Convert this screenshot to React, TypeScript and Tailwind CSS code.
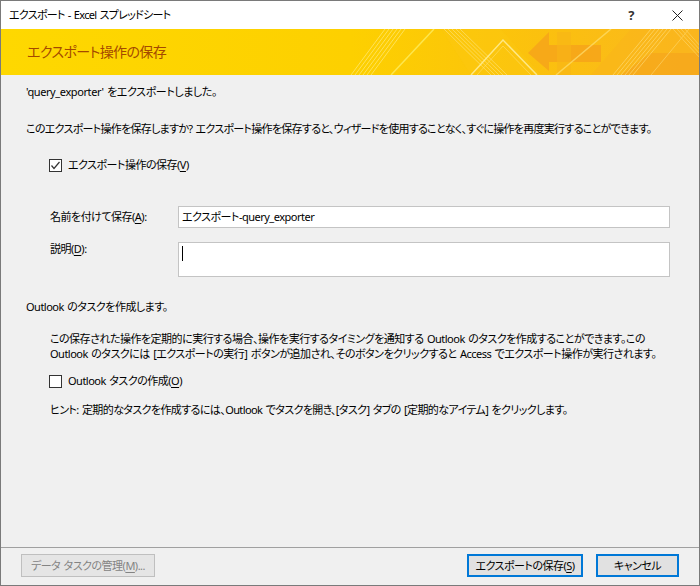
import React from "react";

const font = "font-['Noto_Sans','Noto_Sans_CJK_JP',sans-serif]";

function Banner() {
  return (
    <div className="relative h-[46px] bg-[#fdd200] overflow-hidden">
      <svg className="absolute inset-0" width="700" height="46" viewBox="0 0 700 46">
        <defs>
          <linearGradient id="bg" x1="0" x2="1" y1="0" y2="0">
            <stop offset="0" stopColor="#fed800" />
            <stop offset="0.5" stopColor="#fdd000" />
            <stop offset="0.8" stopColor="#fbbf10" />
            <stop offset="1" stopColor="#fab820" />
          </linearGradient>
        </defs>
        <rect x="0" y="0" width="700" height="46" fill="url(#bg)" />
        <polygon points="527,24 548,3 548,16 600,16 600,33 548,33 548,42" fill="#f6a41a" opacity="0.85" />
        <polygon points="556,3 570,3 570,46 556,46" fill="#f8b518" opacity="0.6" />
        <polygon points="590,46 630,0 700,0 700,46" fill="#f9b41c" opacity="0.55" />
        <polygon points="620,46 650,24 700,24 700,46" fill="#f5a51c" opacity="0.7" />
        <polygon points="440,0 500,0 540,46 470,46" fill="#fcc810" opacity="0.5" />
        <g stroke="#fff3a0" strokeWidth="1" opacity="0.55">
          <line x1="350" y1="46" x2="384" y2="0" />
          <line x1="354" y1="46" x2="388" y2="0" />
          <line x1="358" y1="46" x2="392" y2="0" />
          <line x1="362" y1="46" x2="396" y2="0" />
          <line x1="366" y1="46" x2="400" y2="0" />
          <line x1="370" y1="46" x2="404" y2="0" />
        </g>
        <g stroke="#ffee60" strokeWidth="1.5" opacity="0.8">
          <line x1="390" y1="46" x2="433" y2="0" />
        </g>
        <g stroke="#ffe680" strokeWidth="1" opacity="0.6">
          <line x1="443" y1="0" x2="490" y2="46" />
          <line x1="447" y1="0" x2="494" y2="46" />
          <line x1="451" y1="0" x2="498" y2="46" />
          <line x1="455" y1="0" x2="502" y2="46" />
          <line x1="459" y1="0" x2="506" y2="46" />
        </g>
        <polyline points="470,46 502,11 536,46" fill="none" stroke="#fff0a0" strokeWidth="1.5" opacity="0.8" />
        <polyline points="476,46 502,17 530,46" fill="none" stroke="#ffe070" strokeWidth="1" opacity="0.6" />
        <line x1="610" y1="0" x2="555" y2="46" stroke="#ffe070" strokeWidth="1.5" opacity="0.7" />
        <g stroke="#ffe080" strokeWidth="1" opacity="0.6">
          <line x1="612" y1="46" x2="650" y2="0" />
          <line x1="616" y1="46" x2="654" y2="0" />
          <line x1="620" y1="46" x2="658" y2="0" />
          <line x1="624" y1="46" x2="662" y2="0" />
          <line x1="628" y1="46" x2="666" y2="0" />
          <line x1="632" y1="46" x2="670" y2="0" />
        </g>
        <g stroke="#ffe080" strokeWidth="1" opacity="0.5">
          <line x1="672" y1="0" x2="700" y2="30" />
          <line x1="676" y1="0" x2="700" y2="26" />
          <line x1="680" y1="0" x2="700" y2="22" />
          <line x1="684" y1="0" x2="700" y2="18" />
          <line x1="650" y1="46" x2="688" y2="0" />
        </g>
      </svg>
      <div className="relative flex h-full items-center pl-[26px] text-[14px] tracking-[-0.6px] text-[#a44900]">
        エクスポート操作の保存
      </div>
    </div>
  );
}

function CheckBox({ checked }: { checked: boolean }) {
  return (
    <span className="flex h-[13px] w-[13px] shrink-0 items-center justify-center border border-[#333333] bg-white">
      {checked && (
        <svg width="11" height="11" viewBox="0 0 11 11">
          <polyline points="1.5,5.5 4,8.5 9.5,2" fill="none" stroke="#333333" strokeWidth="1.2" />
        </svg>
      )}
    </span>
  );
}

function U({ children }: { children: React.ReactNode }) {
  return <span className="underline underline-offset-2">{children}</span>;
}

export default function App() {
  return (
    <div className={`${font} flex h-[586px] w-[700px] flex-col border border-[#7a7a7a] bg-[#f0f0f0] text-[11px] leading-[16px] tracking-[-0.5px] [word-spacing:1px] whitespace-nowrap text-black [font-feature-settings:'palt']`}>
      {/* Title bar */}
      <div className="flex h-[28px] items-center bg-white pl-[8px] pr-[16px]">
        <span className="text-[11px] tracking-[-0.7px]">エクスポート - Excel スプレッドシート</span>
        <span className="ml-auto mr-[38px] text-[13px] font-bold text-[#333]">?</span>
        <svg width="11" height="11" viewBox="0 0 11 11">
          <path d="M0.5 0.5 L10.5 10.5 M10.5 0.5 L0.5 10.5" stroke="#222" strokeWidth="1" />
        </svg>
      </div>
      <Banner />

      {/* Body */}
      <div className="flex flex-1 flex-col pl-[25px] pr-[29px]">
        <div className="mt-[9px] tracking-[-0.4px]">'query_exporter' をエクスポートしました。</div>
        <div className="mt-[21px] tracking-[-0.7px]">
          このエクスポート操作を保存しますか? エクスポート操作を保存すると、ウィザードを使用することなく、すぐに操作を再度実行することができます。
        </div>
        <div className="mt-[20px] flex items-center gap-[6px] pl-[23px]">
          <CheckBox checked />
          <span>エクスポート操作の保存(<U>V</U>)</span>
        </div>

        <div className="mt-[33px] flex items-center pl-[24px]">
          <span className="w-[128px]">名前を付けて保存(<U>A</U>):</span>
          <div className="flex h-[22px] flex-1 items-center border border-[#c4c4c4] bg-white pl-[3px]">
            エクスポート-query_exporter
          </div>
        </div>
        <div className="mt-[14px] flex items-start pl-[24px]">
          <span className="mt-[-1px] w-[128px]">説明(<U>D</U>):</span>
          <div className="h-[35px] flex-1 border border-[#c4c4c4] bg-white pl-[3px] pt-[3px]">
            <div className="h-[15px] w-px bg-black" />
          </div>
        </div>

        <div className="mt-[22px]">Outlook のタスクを作成します。</div>
        <div className="mt-[16px] pl-[24px] leading-[15px]">
          この保存された操作を定期的に実行する場合、操作を実行するタイミングを通知する Outlook のタスクを作成することができます。この
          <br />
          Outlook のタスクには [エクスポートの実行] ボタンが追加され、そのボタンをクリックすると Access でエクスポート操作が実行されます。
        </div>
        <div className="mt-[12px] flex items-center gap-[6px] pl-[23px]">
          <CheckBox checked={false} />
          <span>Outlook タスクの作成(<U>O</U>)</span>
        </div>
        <div className="mt-[13px] pl-[24px] tracking-[-0.6px]">
          ヒント: 定期的なタスクを作成するには、Outlook でタスクを開き、[タスク] タブの [定期的なアイテム] をクリックします。
        </div>
      </div>

      {/* Footer */}
      <div className="flex h-[38px] items-start border-t border-[#a0a0a0] pl-[20px] pr-[20px] pt-[6px]">
        <div className="flex h-[23px] w-[134px] items-center justify-center border border-[#bfbfbf] bg-[#e5e5e5] text-[#838383]">
          データ タスクの管理(<U>M</U>)...
        </div>
        <div className="ml-auto flex h-[23px] w-[116px] items-center justify-center border-2 border-[#0078d7] bg-[#e1e1e1]">
          エクスポートの保存(<U>S</U>)
        </div>
        <div className="ml-[13px] flex h-[23px] w-[83px] items-center justify-center border-2 border-[#0078d7] bg-[#e1e1e1]">
          キャンセル
        </div>
      </div>
    </div>
  );
}
